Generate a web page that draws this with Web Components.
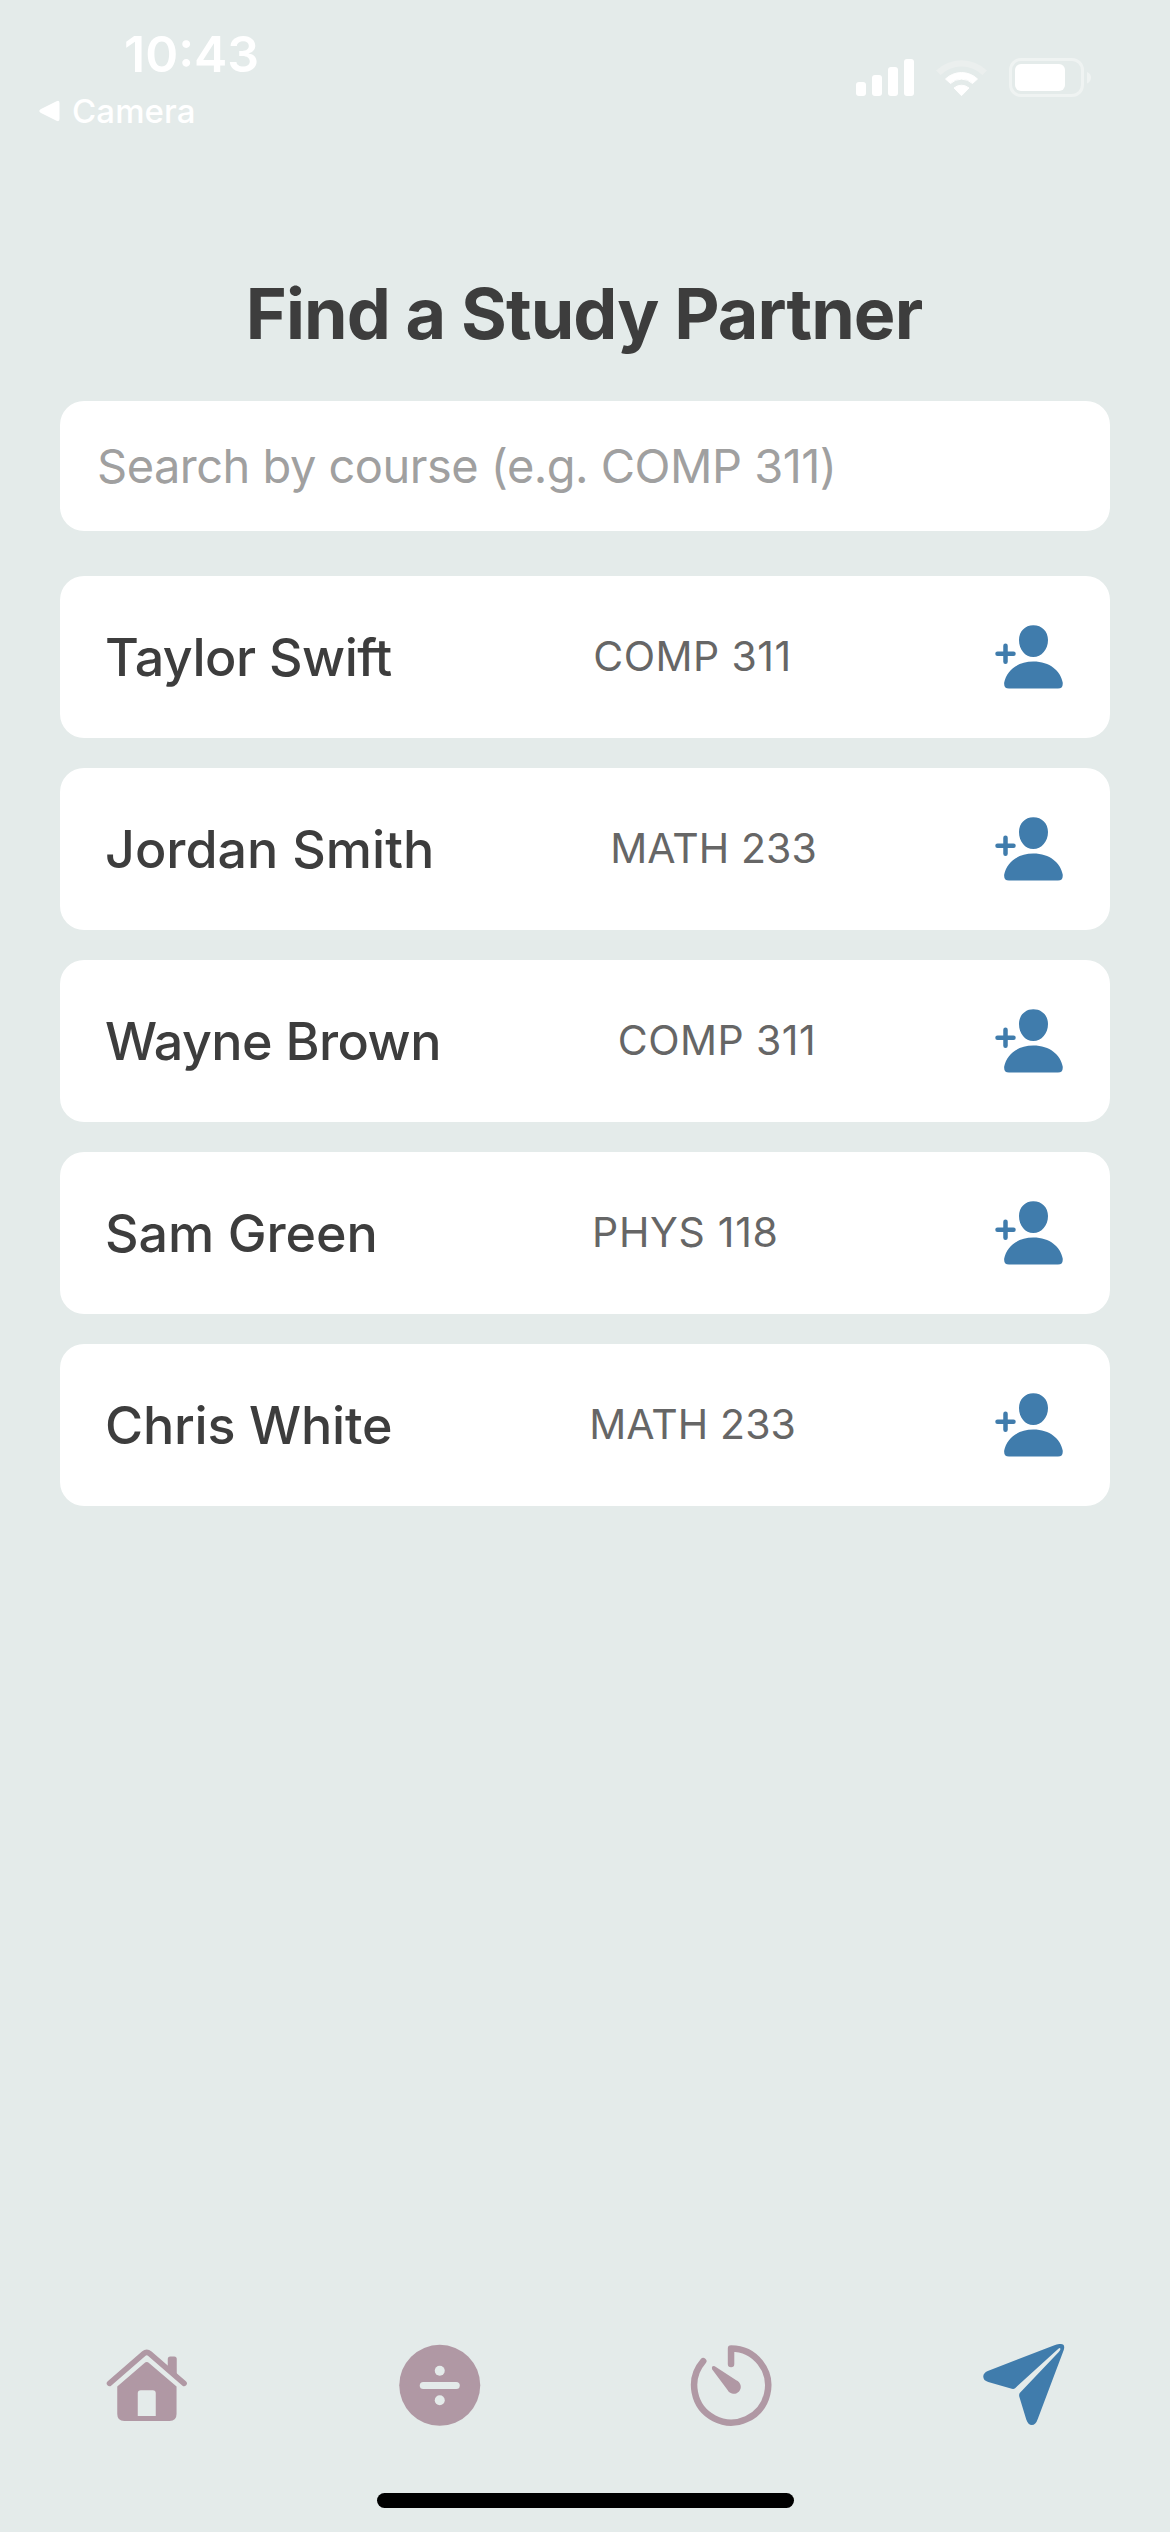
<!DOCTYPE html>
<html lang="en"><head><meta charset="utf-8"><title>Find a Study Partner</title>
<style>
html,body{margin:0;padding:0}
body{width:1170px;height:2532px;overflow:hidden;background:#e4ebea;font-family:Inter,"Liberation Sans",sans-serif}
</style></head><body>
<study-app></study-app>
<script>
const define=(name,html)=>customElements.define(name,class extends HTMLElement{
  connectedCallback(){
    if(this.shadowRoot)return;
    const t=document.createElement('template');t.innerHTML=html;
    this.attachShadow({mode:'open'}).append(t.content.cloneNode(true));
  }
});

define('status-bar',`<style>
:host{display:flex;justify-content:space-between;height:150px;color:#fff;box-sizing:border-box}
.left{display:flex;flex-direction:column;padding:24px 0 0 39px}
.time{font-size:50px;font-weight:600;line-height:60px;padding-left:85px;white-space:nowrap}
.back{display:flex;align-items:center;gap:12px;font-size:33px;font-weight:500;line-height:40px;margin-top:7px;letter-spacing:.1px}
.back svg{display:block}
.right{display:flex;align-items:flex-start;padding:56px 78px 0 0}
</style>
<div class="left"><div class="time"><span>10:43</span></div>
<div class="back"><svg width="21" height="22" viewBox="0 0 21 22"><path d="M2 9 17.500 1.200Q20.500 0 20.500 3V19Q20.500 22 17.500 20.800L2 13Q-1.500 11 2 9Z" fill="#fff"/></svg><span>Camera</span></div></div>
<div class="right"><svg width="236" height="44" viewBox="856 56 236 44" fill="#fff">
<rect x="856" y="82" width="10" height="14" rx="3"/><rect x="872" y="75" width="10" height="21" rx="3"/><rect x="888" y="67" width="10" height="29" rx="3"/><rect x="904" y="59" width="10" height="37" rx="3"/>
<path d="M936 70.500A37 37 0 0 1 987 70.500L982.500 75A30 30 0 0 0 940.500 75Z" fill="#ebefee"/>
<path d="M945.500 79A23 23 0 0 1 977.500 79L972.500 83.500A16 16 0 0 0 950.500 83.500Z" stroke="#fff" stroke-width="1" stroke-linejoin="round"/>
<path d="M954 88A11.500 11.500 0 0 1 969 88L961.500 95.700Z" stroke="#fff" stroke-width="1" stroke-linejoin="round"/>
<rect x="1010.500" y="59.500" width="72" height="36" rx="10.500" fill="none" stroke="#eff3f2" stroke-width="3"/>
<rect x="1015" y="64" width="50" height="27" rx="6"/><path d="M1087 72Q1091 73.500 1091 77.500T1087 83.500Z" fill="#eff3f2"/>
</svg></div>`);

define('search-field',`<style>
:host{display:flex;align-items:center;height:130px;padding:0 37px;border-radius:24px;background:#fff;color:#a0a0a0;font-size:47px;line-height:57px;letter-spacing:-.52px;white-space:nowrap;box-sizing:border-box}
span{margin-bottom:1px}
</style><span><slot></slot></span>`);

define('partner-card',`<style>
:host{display:flex;align-items:center;justify-content:space-between;height:162px;padding:0 45px;border-radius:24px;background:#fff;box-sizing:border-box;white-space:nowrap}
.name{font-size:52px;font-weight:500;line-height:63px;margin-top:1px;color:#3d3d3d}
.course{font-size:41px;line-height:50px;color:#666;margin-bottom:2px}
svg{display:block}
</style><span class="name"><slot name="name"></slot></span><span class="course"><slot name="course"></slot></span>
<svg width="72" height="72" viewBox="993 621 72 72" fill="#407cac"><path d="M1033.300 625.300C1042 625.300 1048 631.500 1048 640C1048 649.500 1041.500 657 1033.300 657S1019 649.500 1019 640C1019 631.500 1025 625.300 1033.300 625.300ZM1033.300 661.500C1050 661.500 1060.500 671 1062.700 682.500Q1063.300 688.500 1058 688.500H1009Q1003.600 688.500 1004.200 682.500C1006.500 671 1017 661.500 1033.300 661.500Z"/><path d="M997.500 653.700H1013.500M1005.500 645.700V661.700" stroke="#407cac" stroke-width="4.500" stroke-linecap="round"/></svg>`);

define('tab-icon',`<style>:host{display:flex;flex:1;justify-content:center}::slotted(svg){display:block}</style><slot></slot>`);

define('tab-bar',`<style>:host{display:flex;align-items:center;height:90px}svg{display:block}</style>
<tab-icon><svg width="90" height="90" viewBox="101.250 2340 90 90" fill="#b098a4"><path d="M117.500 2386.500 144.500 2363.200Q147 2361 149.500 2363.200L176.800 2386.500V2414Q176.800 2421 169.800 2421H124.500Q117.500 2421 117.500 2414ZM141 2390.200Q138 2390.200 138 2393.200V2416H156V2393.200Q156 2390.200 153 2390.200Z" fill-rule="evenodd"/><path d="M109.800 2383.300 144 2353.600Q147 2351 150 2353.600L184.300 2383.300" fill="none" stroke="#b098a4" stroke-width="5.600" stroke-linecap="round"/><path d="M168 2368V2359Q168 2356.500 170.500 2356.500H174.500Q177 2356.500 177 2359V2376Z"/></svg></tab-icon>
<tab-icon><svg width="90" height="90" viewBox="393.750 2340 90 90"><circle cx="439.500" cy="2385.300" r="40.500" fill="#b098a4"/><g fill="#e4ebea"><rect x="419.500" y="2382" width="40" height="7" rx="3.500"/><circle cx="439.500" cy="2370.700" r="5"/><circle cx="439.500" cy="2400.300" r="5"/></g></svg></tab-icon>
<tab-icon><svg width="90" height="90" viewBox="686.250 2340 90 90"><path d="M731.300 2364V2348.500A37 37 0 1 1 703.500 2361.200" fill="none" stroke="#b098a4" stroke-width="6.500" stroke-linecap="round" stroke-linejoin="round"/><path d="M712.300 2369.200Q711.500 2365.500 715 2366.200L736.500 2380.300A7 7 0 1 1 727.800 2390Z" fill="#b098a4"/></svg></tab-icon>
<tab-icon><svg width="90" height="90" viewBox="978.750 2340 90 90" fill="#407cac"><path d="M1014.800 2388.200 1057 2349.800Q1059.500 2347.300 1060 2348.500Q1060.800 2349.500 1058.500 2352L1019.500 2393Q1018.600 2394.500 1019 2396.500L1026 2419.500Q1028 2425 1031.500 2425Q1035.500 2425 1037.500 2419L1063.500 2350Q1065.500 2343 1059 2344Q1056.500 2344.200 1053.500 2345.500L987.500 2371Q983 2373 983 2376.500Q983 2380.500 988 2382L1011.500 2388.800Q1013.800 2389.300 1014.800 2388.200Z"/></svg></tab-icon>`);

define('study-app',`<style>
:host{display:flex;flex-direction:column;width:1170px;height:2532px;background:#e4ebea}
h1{margin:0;padding:121px 2px 0 0;font-size:70px;font-weight:700;line-height:85px;letter-spacing:-.9px;color:#3d3d3d;text-align:center;white-space:nowrap}
main{flex:1;display:flex;flex-direction:column;padding:0 60px}
search-field{margin:45px 0}
.list{display:flex;flex-direction:column;gap:30px}
footer{display:flex;flex-direction:column;height:192px}
.home{width:417px;height:15px;border-radius:8px;background:#000;margin:63px 0 0 377px}
</style>
<status-bar></status-bar>
<main><h1>Find a Study Partner</h1>
<search-field>Search by course (e.g. COMP 311)</search-field>
<div class="list">
<partner-card><span slot="name" style="letter-spacing:-.5px">Taylor Swift</span><span slot="course" style="letter-spacing:.45px">COMP 311</span></partner-card>
<partner-card><span slot="name">Jordan Smith</span><span slot="course" style="letter-spacing:.1px">MATH 233</span></partner-card>
<partner-card><span slot="name" style="letter-spacing:-.55px">Wayne Brown</span><span slot="course" style="letter-spacing:.45px">COMP 311</span></partner-card>
<partner-card><span slot="name" style="letter-spacing:-.1px">Sam Green</span><span slot="course" style="letter-spacing:.7px">PHYS 118</span></partner-card>
<partner-card><span slot="name" style="letter-spacing:-.2px">Chris White</span><span slot="course" style="letter-spacing:.1px">MATH 233</span></partner-card>
</div></main>
<footer><tab-bar></tab-bar><div class="home"></div></footer>`);
</script></body></html>
